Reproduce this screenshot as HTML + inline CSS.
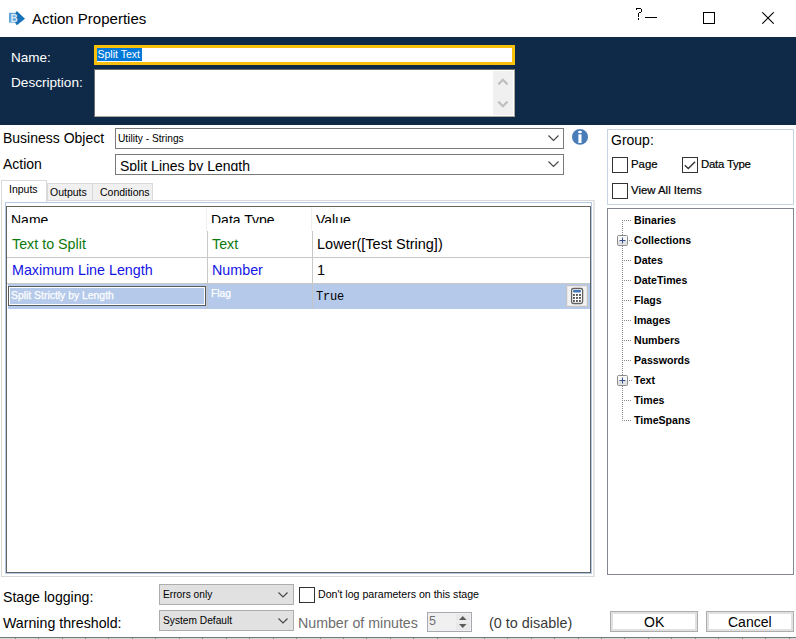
<!DOCTYPE html>
<html><head><meta charset="utf-8">
<style>
*{margin:0;padding:0;box-sizing:border-box}
html,body{width:796px;height:639px;overflow:hidden;background:#fff;font-family:"Liberation Sans",sans-serif;color:#000}
.a{position:absolute;white-space:nowrap}
.t{position:absolute;white-space:nowrap;line-height:1}
</style></head><body>
<!-- title bar -->
<svg class="a" style="left:0;top:0" width="30" height="30" viewBox="0 0 30 30">
  <polygon points="16.8,10.9 25,18.8 16.8,25.3 12,18" fill="#1571b9"/>
  <rect x="9" y="12.8" width="6.6" height="9.8" fill="#62a2da"/>
  <text x="10.4" y="21.6" font-family="Liberation Sans" font-weight="bold" font-size="10" fill="#dceaf6">B</text>
</svg>
<div class="t" style="left:32px;top:11px;font-size:15px">Action Properties</div>
<svg class="a" style="left:630px;top:0" width="20" height="24" viewBox="0 0 20 24" shape-rendering="crispEdges"><g fill="#000"><rect x="6" y="8" width="5" height="1"/><rect x="6" y="9" width="1" height="1"/><rect x="11" y="9" width="1" height="3"/><rect x="9" y="12" width="2" height="1"/><rect x="8" y="13" width="1" height="4"/><rect x="8" y="18" width="1" height="2"/></g></svg>
<div class="a" style="left:645px;top:17px;width:12px;height:1px;background:#000"></div>
<div class="a" style="left:703px;top:12px;width:12px;height:12px;border:1px solid #000"></div>
<svg class="a" style="left:762px;top:12px" width="12" height="12" viewBox="0 0 12 12"><path d="M0.3 0.3L11.7 11.7M11.7 0.3L0.3 11.7" stroke="#000" stroke-width="1.1"/></svg>

<!-- dark header -->
<div class="a" style="left:0;top:37px;width:796px;height:88px;background:#0f2a48"></div>
<div class="t" style="left:11px;top:50.6px;font-size:13.5px;color:#fff">Name:</div>
<div class="t" style="left:11px;top:75.8px;font-size:13.6px;color:#fff">Description:</div>
<div class="a" style="left:94px;top:45px;width:421px;height:20px;background:#fff;border:3px solid #f9bf0b"></div>
<div class="a" style="left:97px;top:48px;width:45px;height:13px;background:#0078d7"></div>
<div class="t" style="left:97.5px;top:49px;font-size:10.5px;color:#fff">Split Text</div>
<div class="a" style="left:94px;top:69px;width:421px;height:48px;background:#fff;border-top:1px solid #6d6d6d;border-left:1px solid #6d6d6d;border-right:1px solid #aaa59f;border-bottom:1px solid #aaa59f"></div>
<div class="a" style="left:493px;top:71px;width:20px;height:44px;background:#f0f0f0"></div>
<svg class="a" style="left:493px;top:71px" width="20" height="44" viewBox="0 0 20 44"><path d="M5.3 13.4L9.9 8.8L14.5 13.4M5.3 30.6L9.9 35.2L14.5 30.6" stroke="#bfbfbf" stroke-width="2.2" fill="none"/></svg>

<!-- business object / action -->
<div class="t" style="left:3px;top:131px;font-size:14px">Business Object</div>
<div class="t" style="left:3px;top:157px;font-size:14px">Action</div>
<div class="a" style="left:115px;top:128px;width:449px;height:21px;border:1px solid #7a7a7a;background:#fff"></div>
<div class="t" style="left:118px;top:134px;font-size:10.2px">Utility - Strings</div>
<svg class="a" style="left:548px;top:135px" width="11" height="7" viewBox="0 0 11 7"><path d="M0.5 0.5L5.5 5.5L10.5 0.5" stroke="#444" stroke-width="1.1" fill="none"/></svg>
<div class="a" style="left:115px;top:154px;width:449px;height:21px;border:1px solid #7a7a7a;background:#fff"></div>
<div class="a" style="left:116px;top:155px;width:420px;height:16px;overflow:hidden">
  <div class="t" style="left:4px;top:4.2px;font-size:14px">Split Lines by Length</div>
</div>
<svg class="a" style="left:548px;top:161px" width="11" height="7" viewBox="0 0 11 7"><path d="M0.5 0.5L5.5 5.5L10.5 0.5" stroke="#444" stroke-width="1.1" fill="none"/></svg>
<svg class="a" style="left:572px;top:128px" width="16" height="17" viewBox="0 0 16 17"><ellipse cx="8" cy="8.9" rx="8" ry="7.95" fill="#4a7cb8"/><ellipse cx="8" cy="4" rx="1.9" ry="1.35" fill="#fff"/><rect x="6.4" y="6.3" width="3.1" height="8.7" fill="#fff"/></svg>

<!-- tabs -->
<div class="a" style="left:47px;top:183px;width:46px;height:18px;background:#f0f0f0;border:1px solid #d9d9d9;border-bottom:none"></div>
<div class="a" style="left:93px;top:183px;width:60px;height:18px;background:#f0f0f0;border:1px solid #d9d9d9;border-bottom:none;border-left:none"></div>
<div class="a" style="left:1px;top:200px;width:594px;height:377px;border:1px solid #d9d9d9;border-right:2px solid #e6e6e6;background:#fff"></div>
<div class="a" style="left:1px;top:180px;width:46px;height:22px;background:#fff;border:1px solid #d9d9d9;border-bottom:none"></div>
<div class="t" style="left:9px;top:184px;font-size:10.5px">Inputs</div>
<div class="t" style="left:50px;top:187px;font-size:10.5px">Outputs</div>
<div class="t" style="left:100px;top:187px;font-size:10.5px">Conditions</div>

<!-- grid -->
<div class="a" style="left:5px;top:202px;width:587px;height:372px;border:1px solid #b3c9e3"></div>
<div class="a" style="left:6px;top:206px;width:585px;height:367px;border:1px solid #646464;background:#fff"></div>
<div class="a" style="left:206px;top:207px;width:1px;height:24px;background:#f0f0f0"></div>
<div class="a" style="left:311px;top:207px;width:1px;height:24px;background:#f0f0f0"></div>
<div class="a" style="left:7px;top:207px;width:583px;height:16px;overflow:hidden">
  <div class="t" style="left:4px;top:5.5px;font-size:14px">Name</div>
  <div class="t" style="left:204px;top:5.5px;font-size:14px">Data Type</div>
  <div class="t" style="left:309px;top:5.5px;font-size:14px">Value</div>
</div>
<!-- row1 -->
<div class="a" style="left:207px;top:231px;width:1px;height:52px;background:#c8c8c8"></div>
<div class="a" style="left:312px;top:231px;width:1px;height:52px;background:#c8c8c8"></div>
<div class="a" style="left:7px;top:257px;width:583px;height:1px;background:#c8c8c8"></div>
<div class="a" style="left:7px;top:283px;width:583px;height:1px;background:#c8c8c8"></div>
<div class="t" style="left:12px;top:237.4px;font-size:14.3px;color:#0c7a0c">Text to Split</div>
<div class="t" style="left:212px;top:237.4px;font-size:14.3px;color:#0c7a0c">Text</div>
<div class="t" style="left:317px;top:237.3px;font-size:14.5px">Lower([Test String])</div>
<div class="t" style="left:12px;top:263.4px;font-size:14.3px;color:#1414e6">Maximum Line Length</div>
<div class="t" style="left:212px;top:263.4px;font-size:14.3px;color:#1414e6">Number</div>
<div class="t" style="left:317px;top:263.3px;font-size:14.5px">1</div>
<!-- row3 selected -->
<div class="a" style="left:8px;top:284px;width:582px;height:25px;background:#b5caea"></div>
<div class="a" style="left:207px;top:284px;width:1px;height:25px;background:#c4c4c4"></div>
<div class="a" style="left:312px;top:284px;width:1px;height:25px;background:#c4c4c4"></div>
<div class="a" style="left:8px;top:286px;width:198px;height:20px;border:1px solid #5a5a5a"></div><div class="a" style="left:9px;top:287px;width:196px;height:18px;border:1px solid #fff"></div>
<div class="t" style="left:11px;top:291px;font-size:10.4px;color:#fff;-webkit-text-stroke:0.25px #fff">Split Strictly by Length</div>
<div class="t" style="left:211px;top:289px;font-size:10.2px;color:#fff;-webkit-text-stroke:0.25px #fff">Flag</div>
<div class="t" style="left:316px;top:291.3px;font-size:12px;letter-spacing:-0.2px;font-family:'Liberation Mono',monospace">True</div>
<div class="a" style="left:566px;top:285px;width:22px;height:22px;background:#e8e8e8;border:1px solid #c4c4c4"></div>
<div class="a" style="left:568px;top:287px;width:18px;height:18px;background:#f2f2f2"></div>
<svg class="a" style="left:566px;top:285px" width="22" height="22" viewBox="0 0 22 22"><rect x="5.6" y="3.5" width="11" height="15" rx="1.8" fill="#fff" stroke="#626262" stroke-width="1.3"/><rect x="7" y="5" width="8" height="2.6" rx="1" fill="#3f74b8"/><g fill="#555"><rect x="7" y="9" width="1.9" height="1.9"/><rect x="10" y="9" width="1.9" height="1.9"/><rect x="13" y="9" width="1.9" height="1.9"/><rect x="7" y="12" width="1.9" height="1.9"/><rect x="10" y="12" width="1.9" height="1.9"/><rect x="13" y="12" width="1.9" height="1.9"/><rect x="7" y="15" width="1.9" height="1.9"/><rect x="10" y="15" width="1.9" height="1.9"/><rect x="13" y="15" width="1.9" height="1.9"/></g></svg>

<!-- right panel -->
<div class="a" style="left:607px;top:129px;width:187px;height:76px;border:1px solid #c8d4e4"></div>
<div class="t" style="left:611px;top:133px;font-size:14px">Group:</div>
<div class="a" style="left:612px;top:157px;width:16px;height:16px;border:1px solid #333;background:#fff"></div>
<div class="t" style="left:631px;top:159px;font-size:11.4px;-webkit-text-stroke:0.2px #000">Page</div>
<div class="a" style="left:682px;top:157px;width:16px;height:16px;border:1px solid #333;background:#fff"></div>
<svg class="a" style="left:682px;top:157px" width="16" height="16" viewBox="0 0 16 16"><path d="M2.8 8.2L6.3 11.5L13.1 4.8" stroke="#383838" stroke-width="1.45" fill="none"/></svg>
<div class="t" style="left:701px;top:159px;font-size:11.4px;letter-spacing:-0.22px;-webkit-text-stroke:0.2px #000">Data Type</div>
<div class="a" style="left:612px;top:183px;width:16px;height:16px;border:1px solid #333;background:#fff"></div>
<div class="t" style="left:631px;top:185px;font-size:11.4px;-webkit-text-stroke:0.2px #000">View All Items</div>

<div class="a" style="left:607px;top:208px;width:187px;height:367px;border:1px solid #828790;background:#fff"></div>
<svg class="a" style="left:607px;top:208px" width="40" height="220" viewBox="0 0 40 220"><g fill="#8a8a8a"><rect x="15" y="12" width="1" height="1"/><rect x="15" y="14" width="1" height="1"/><rect x="15" y="16" width="1" height="1"/><rect x="15" y="18" width="1" height="1"/><rect x="15" y="20" width="1" height="1"/><rect x="15" y="22" width="1" height="1"/><rect x="15" y="24" width="1" height="1"/><rect x="15" y="26" width="1" height="1"/><rect x="15" y="28" width="1" height="1"/><rect x="15" y="30" width="1" height="1"/><rect x="15" y="32" width="1" height="1"/><rect x="15" y="34" width="1" height="1"/><rect x="15" y="36" width="1" height="1"/><rect x="15" y="38" width="1" height="1"/><rect x="15" y="40" width="1" height="1"/><rect x="15" y="42" width="1" height="1"/><rect x="15" y="44" width="1" height="1"/><rect x="15" y="46" width="1" height="1"/><rect x="15" y="48" width="1" height="1"/><rect x="15" y="50" width="1" height="1"/><rect x="15" y="52" width="1" height="1"/><rect x="15" y="54" width="1" height="1"/><rect x="15" y="56" width="1" height="1"/><rect x="15" y="58" width="1" height="1"/><rect x="15" y="60" width="1" height="1"/><rect x="15" y="62" width="1" height="1"/><rect x="15" y="64" width="1" height="1"/><rect x="15" y="66" width="1" height="1"/><rect x="15" y="68" width="1" height="1"/><rect x="15" y="70" width="1" height="1"/><rect x="15" y="72" width="1" height="1"/><rect x="15" y="74" width="1" height="1"/><rect x="15" y="76" width="1" height="1"/><rect x="15" y="78" width="1" height="1"/><rect x="15" y="80" width="1" height="1"/><rect x="15" y="82" width="1" height="1"/><rect x="15" y="84" width="1" height="1"/><rect x="15" y="86" width="1" height="1"/><rect x="15" y="88" width="1" height="1"/><rect x="15" y="90" width="1" height="1"/><rect x="15" y="92" width="1" height="1"/><rect x="15" y="94" width="1" height="1"/><rect x="15" y="96" width="1" height="1"/><rect x="15" y="98" width="1" height="1"/><rect x="15" y="100" width="1" height="1"/><rect x="15" y="102" width="1" height="1"/><rect x="15" y="104" width="1" height="1"/><rect x="15" y="106" width="1" height="1"/><rect x="15" y="108" width="1" height="1"/><rect x="15" y="110" width="1" height="1"/><rect x="15" y="112" width="1" height="1"/><rect x="15" y="114" width="1" height="1"/><rect x="15" y="116" width="1" height="1"/><rect x="15" y="118" width="1" height="1"/><rect x="15" y="120" width="1" height="1"/><rect x="15" y="122" width="1" height="1"/><rect x="15" y="124" width="1" height="1"/><rect x="15" y="126" width="1" height="1"/><rect x="15" y="128" width="1" height="1"/><rect x="15" y="130" width="1" height="1"/><rect x="15" y="132" width="1" height="1"/><rect x="15" y="134" width="1" height="1"/><rect x="15" y="136" width="1" height="1"/><rect x="15" y="138" width="1" height="1"/><rect x="15" y="140" width="1" height="1"/><rect x="15" y="142" width="1" height="1"/><rect x="15" y="144" width="1" height="1"/><rect x="15" y="146" width="1" height="1"/><rect x="15" y="148" width="1" height="1"/><rect x="15" y="150" width="1" height="1"/><rect x="15" y="152" width="1" height="1"/><rect x="15" y="154" width="1" height="1"/><rect x="15" y="156" width="1" height="1"/><rect x="15" y="158" width="1" height="1"/><rect x="15" y="160" width="1" height="1"/><rect x="15" y="162" width="1" height="1"/><rect x="15" y="164" width="1" height="1"/><rect x="15" y="166" width="1" height="1"/><rect x="15" y="168" width="1" height="1"/><rect x="15" y="170" width="1" height="1"/><rect x="15" y="172" width="1" height="1"/><rect x="15" y="174" width="1" height="1"/><rect x="15" y="176" width="1" height="1"/><rect x="15" y="178" width="1" height="1"/><rect x="15" y="180" width="1" height="1"/><rect x="15" y="182" width="1" height="1"/><rect x="15" y="184" width="1" height="1"/><rect x="15" y="186" width="1" height="1"/><rect x="15" y="188" width="1" height="1"/><rect x="15" y="190" width="1" height="1"/><rect x="15" y="192" width="1" height="1"/><rect x="15" y="194" width="1" height="1"/><rect x="15" y="196" width="1" height="1"/><rect x="15" y="198" width="1" height="1"/><rect x="15" y="200" width="1" height="1"/><rect x="15" y="202" width="1" height="1"/><rect x="15" y="204" width="1" height="1"/><rect x="15" y="206" width="1" height="1"/><rect x="15" y="208" width="1" height="1"/><rect x="15" y="210" width="1" height="1"/><rect x="15" y="212" width="1" height="1"/><rect x="17" y="12" width="1" height="1"/><rect x="19" y="12" width="1" height="1"/><rect x="21" y="12" width="1" height="1"/><rect x="23" y="12" width="1" height="1"/><rect x="22" y="32" width="1" height="1"/><rect x="24" y="32" width="1" height="1"/><rect x="17" y="52" width="1" height="1"/><rect x="19" y="52" width="1" height="1"/><rect x="21" y="52" width="1" height="1"/><rect x="23" y="52" width="1" height="1"/><rect x="17" y="72" width="1" height="1"/><rect x="19" y="72" width="1" height="1"/><rect x="21" y="72" width="1" height="1"/><rect x="23" y="72" width="1" height="1"/><rect x="17" y="92" width="1" height="1"/><rect x="19" y="92" width="1" height="1"/><rect x="21" y="92" width="1" height="1"/><rect x="23" y="92" width="1" height="1"/><rect x="17" y="112" width="1" height="1"/><rect x="19" y="112" width="1" height="1"/><rect x="21" y="112" width="1" height="1"/><rect x="23" y="112" width="1" height="1"/><rect x="17" y="132" width="1" height="1"/><rect x="19" y="132" width="1" height="1"/><rect x="21" y="132" width="1" height="1"/><rect x="23" y="132" width="1" height="1"/><rect x="17" y="152" width="1" height="1"/><rect x="19" y="152" width="1" height="1"/><rect x="21" y="152" width="1" height="1"/><rect x="23" y="152" width="1" height="1"/><rect x="22" y="172" width="1" height="1"/><rect x="24" y="172" width="1" height="1"/><rect x="17" y="192" width="1" height="1"/><rect x="19" y="192" width="1" height="1"/><rect x="21" y="192" width="1" height="1"/><rect x="23" y="192" width="1" height="1"/><rect x="17" y="212" width="1" height="1"/><rect x="19" y="212" width="1" height="1"/><rect x="21" y="212" width="1" height="1"/><rect x="23" y="212" width="1" height="1"/></g><rect x="10.5" y="27.5" width="10" height="10" rx="1" fill="url(#pg)" stroke="#8c8c8c"/><path d="M12.5 32.5H18.5M15.5 29.5V35.5" stroke="#34508f" stroke-width="1"/><rect x="10.5" y="167.5" width="10" height="10" rx="1" fill="url(#pg)" stroke="#8c8c8c"/><path d="M12.5 172.5H18.5M15.5 169.5V175.5" stroke="#34508f" stroke-width="1"/><defs><linearGradient id="pg" x1="0" y1="0" x2="0" y2="1"><stop offset="0.5" stop-color="#f8f8f8"/><stop offset="0.5" stop-color="#e2e2e2"/></linearGradient></defs></svg>
<div class="t" style="left:634px;top:215px;font-size:10.6px;font-weight:bold">Binaries</div>
<div class="t" style="left:634px;top:235px;font-size:10.6px;font-weight:bold">Collections</div>
<div class="t" style="left:634px;top:255px;font-size:10.6px;font-weight:bold">Dates</div>
<div class="t" style="left:634px;top:275px;font-size:10.6px;font-weight:bold">DateTimes</div>
<div class="t" style="left:634px;top:295px;font-size:10.6px;font-weight:bold">Flags</div>
<div class="t" style="left:634px;top:315px;font-size:10.6px;font-weight:bold">Images</div>
<div class="t" style="left:634px;top:335px;font-size:10.6px;font-weight:bold">Numbers</div>
<div class="t" style="left:634px;top:355px;font-size:10.6px;font-weight:bold">Passwords</div>
<div class="t" style="left:634px;top:375px;font-size:10.6px;font-weight:bold">Text</div>
<div class="t" style="left:634px;top:395px;font-size:10.6px;font-weight:bold">Times</div>
<div class="t" style="left:634px;top:415px;font-size:10.6px;font-weight:bold">TimeSpans</div>

<!-- bottom -->
<div class="t" style="left:3px;top:590px;font-size:14.15px">Stage logging:</div>
<div class="t" style="left:3px;top:616px;font-size:14.2px">Warning threshold:</div>
<div class="a" style="left:159px;top:584px;width:135px;height:21px;background:#e1e1e1;border:1px solid #adadad"></div>
<div class="t" style="left:163px;top:589.6px;font-size:10.2px">Errors only</div>
<svg class="a" style="left:278px;top:592px" width="11" height="7" viewBox="0 0 11 7"><path d="M0.5 0.5L5 5L9.5 0.5" stroke="#444" stroke-width="1.1" fill="none"/></svg>
<div class="a" style="left:159px;top:610px;width:135px;height:21px;background:#e1e1e1;border:1px solid #adadad"></div>
<div class="t" style="left:163px;top:615.6px;font-size:10.2px">System Default</div>
<svg class="a" style="left:278px;top:618px" width="11" height="7" viewBox="0 0 11 7"><path d="M0.5 0.5L5 5L9.5 0.5" stroke="#444" stroke-width="1.1" fill="none"/></svg>
<div class="a" style="left:299px;top:587px;width:16px;height:16px;border:1px solid #333;background:#fff"></div>
<div class="t" style="left:318px;top:589px;font-size:10.6px">Don't log parameters on this stage</div>
<div class="t" style="left:298px;top:616px;font-size:14.2px;color:#6d6d6d">Number of minutes</div>
<div class="a" style="left:427px;top:612px;width:45px;height:20px;background:#f0f0f0;border:1px solid #a8a9b0"></div>
<div class="a" style="left:456px;top:614px;width:14px;height:7px;background:#e9e9e9"></div>
<div class="a" style="left:456px;top:622px;width:14px;height:8px;background:#e9e9e9"></div>
<svg class="a" style="left:456px;top:612px" width="16" height="20" viewBox="0 0 16 20"><path d="M3 8H10.5L6.75 4Z M3 12H10.5L6.75 16Z" fill="#5c5c5c"/></svg>
<div class="t" style="left:429px;top:615px;font-size:12.5px;color:#707070">5</div>
<div class="t" style="left:489px;top:616px;font-size:14.4px;color:#3a3a3a">(0 to disable)</div>
<div class="a" style="left:610px;top:611px;width:88px;height:21px;background:#fff;border:1px solid #adadad;box-shadow:inset 0 0 0 2px #e1e1e1"></div>
<div class="t" style="left:644px;top:615px;font-size:14px">OK</div>
<div class="a" style="left:706px;top:611px;width:88px;height:21px;background:#fff;border:1px solid #adadad;box-shadow:inset 0 0 0 2px #e1e1e1"></div>
<div class="t" style="left:728px;top:615px;font-size:14px">Cancel</div>
<div class="a" style="left:0;top:637px;width:796px;height:1px;background:#7a7a7a"></div>
<div class="a" style="left:0;top:638px;width:796px;height:1px;background:#d6d6d6"></div>
<svg class="a" style="left:0;top:637px" width="796" height="2" viewBox="0 0 796 2"><g fill="#8a8a8a"><rect x="15" y="1" width="1" height="1"/><rect x="38" y="1" width="1" height="1"/><rect x="62" y="1" width="1" height="1"/><rect x="85" y="1" width="1" height="1"/><rect x="108" y="1" width="1" height="1"/><rect x="132" y="1" width="1" height="1"/><rect x="155" y="1" width="1" height="1"/><rect x="179" y="1" width="1" height="1"/><rect x="202" y="1" width="1" height="1"/><rect x="226" y="1" width="1" height="1"/><rect x="249" y="1" width="1" height="1"/><rect x="273" y="1" width="1" height="1"/><rect x="296" y="1" width="1" height="1"/><rect x="320" y="1" width="1" height="1"/><rect x="343" y="1" width="1" height="1"/><rect x="366" y="1" width="1" height="1"/><rect x="390" y="1" width="1" height="1"/><rect x="413" y="1" width="1" height="1"/><rect x="437" y="1" width="1" height="1"/><rect x="460" y="1" width="1" height="1"/><rect x="484" y="1" width="1" height="1"/><rect x="507" y="1" width="1" height="1"/><rect x="531" y="1" width="1" height="1"/><rect x="554" y="1" width="1" height="1"/><rect x="578" y="1" width="1" height="1"/><rect x="601" y="1" width="1" height="1"/><rect x="624" y="1" width="1" height="1"/><rect x="648" y="1" width="1" height="1"/><rect x="671" y="1" width="1" height="1"/><rect x="695" y="1" width="1" height="1"/><rect x="718" y="1" width="1" height="1"/><rect x="742" y="1" width="1" height="1"/><rect x="765" y="1" width="1" height="1"/><rect x="789" y="1" width="1" height="1"/></g></svg>
</body></html>
